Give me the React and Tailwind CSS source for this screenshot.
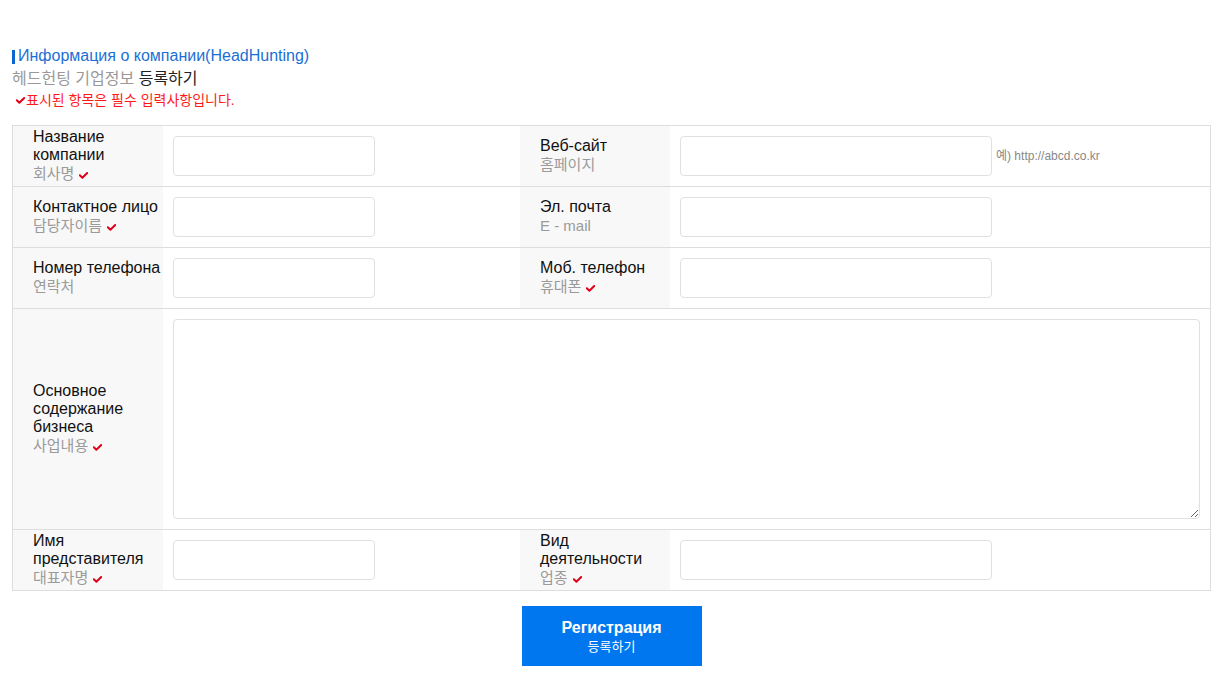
import React from 'react';

const font = "font-['Liberation_Sans','Noto_Sans_CJK_KR',sans-serif]";

const Check = () => (
  <svg width="9" height="7" viewBox="0 0 9 7" className="inline-block ml-[5px] align-middle">
    <path d="M0.8 3.2 L3.4 5.8 L8.2 1" stroke="#e3001b" strokeWidth="2" fill="none" strokeLinecap="round" strokeLinejoin="round" />
  </svg>
);

const Label = ({ ru, ko, req }) => (
  <div className="w-[150px] shrink-0 bg-[#f8f8f8] pl-5 flex flex-col justify-center">
    <div className="text-[16px] leading-[18px] text-[#111]">{ru}</div>
    <div className="text-[15px] leading-[20px] text-[#9a9a9a]">
      {ko}
      {req && <Check />}
    </div>
  </div>
);

const Input = ({ w }) => (
  <input type="text" className={`${w} h-10 border border-[#e0e0e0] rounded bg-white outline-none`} />
);

const Row = ({ children, h = 'h-[61px]' }) => (
  <div className={`flex ${h} border-b border-[#ddd] last:border-b-0`}>{children}</div>
);

export default function App() {
  return (
    <div className={`${font} bg-white min-h-screen px-3 pt-[46px]`}>
      <h2 className="flex items-center text-[16px] leading-5 text-[#1a6fd6]">
        <span className="w-[3px] h-[14px] bg-[#0a64d2] mr-[3px] mt-[2px]" />
        Информация о компании(HeadHunting)
      </h2>
      <p className="text-[16px] leading-5 mt-[3px] text-[#999]">
        헤드헌팅 기업정보 <span className="text-[#222]">등록하기</span>
      </p>
      <p className="text-[14px] leading-4 mt-[3px] pl-1 text-[#ff1a1a] flex items-center">
        <svg width="9" height="7" viewBox="0 0 9 7" className="mr-[1px]">
          <path d="M0.8 3.2 L3.4 5.8 L8.2 1" stroke="#e3001b" strokeWidth="2" fill="none" strokeLinecap="round" strokeLinejoin="round" />
        </svg>
        표시된 항목은 필수 입력사항입니다.
      </p>

      <div className="mt-[17px] border border-[#ddd]">
        <Row>
          <Label ru="Название компании" ko="회사명" req />
          <div className="w-[357px] flex items-center pl-[10px]"><Input w="w-[202px]" /></div>
          <Label ru="Веб-сайт" ko="홈페이지" />
          <div className="flex-1 flex items-center pl-[10px]">
            <Input w="w-[312px]" />
            <span className="ml-1 text-[12px] text-[#888]">예) http://abcd.co.kr</span>
          </div>
        </Row>
        <Row>
          <Label ru="Контактное лицо" ko="담당자이름" req />
          <div className="w-[357px] flex items-center pl-[10px]"><Input w="w-[202px]" /></div>
          <Label ru="Эл. почта" ko="E - mail" />
          <div className="flex-1 flex items-center pl-[10px]"><Input w="w-[312px]" /></div>
        </Row>
        <Row>
          <Label ru="Номер телефона" ko="연락처" />
          <div className="w-[357px] flex items-center pl-[10px]"><Input w="w-[202px]" /></div>
          <Label ru="Моб. телефон" ko="휴대폰" req />
          <div className="flex-1 flex items-center pl-[10px]"><Input w="w-[312px]" /></div>
        </Row>
        <Row h="h-[221px]">
          <Label ru="Основное содержание бизнеса" ko="사업내용" req />
          <div className="flex-1 flex items-center px-[10px]">
            <textarea className="w-full h-[200px] border border-[#e0e0e0] rounded bg-white outline-none" />
          </div>
        </Row>
        <Row h="h-[60px]">
          <Label ru="Имя представителя" ko="대표자명" req />
          <div className="w-[357px] flex items-center pl-[10px]"><Input w="w-[202px]" /></div>
          <Label ru="Вид деятельности" ko="업종" req />
          <div className="flex-1 flex items-center pl-[10px]"><Input w="w-[312px]" /></div>
        </Row>
      </div>

      <div className="flex justify-center mt-[15px]">
        <button className="w-[180px] h-[60px] bg-[#0077ee] text-white flex flex-col items-center justify-center">
          <span className="text-[16px] font-bold leading-5">Регистрация</span>
          <span className="text-[13px] leading-4 mt-[1px]">등록하기</span>
        </button>
      </div>
    </div>
  );
}
